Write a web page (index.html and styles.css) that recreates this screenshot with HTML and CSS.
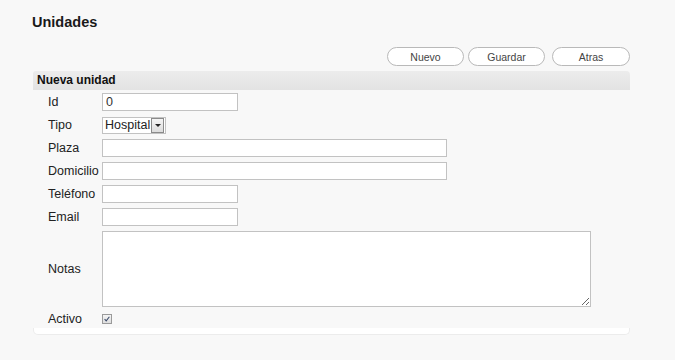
FILE: index.html
```html
<!DOCTYPE html>
<html lang="es">
<head>
  <title>Unidades</title>
  <meta charset="utf-8">
  <meta name="viewport" content="width=device-width, initial-scale=1">
  <link rel="stylesheet" href="styles.css">
</head>

<body>
  <div class="page">
    <h1 class="page__title">Unidades</h1>

    <div class="toolbar">
      <button class="toolbar__button" type="button">Nuevo</button>
      <button class="toolbar__button" type="button">Guardar</button>
      <button class="toolbar__button toolbar__button_wide" type="button">Atras</button>
    </div>

    <form class="panel" id="unidadForm">
      <div class="panel__header">Nueva unidad</div>

      <div class="panel__body">
        <label class="field__label" for="unidad_Id">Id</label>
        <input class="field__input field__input_short" id="unidad_Id" type="text" value="0">

        <label class="field__label" for="unidad_Tipo">Tipo</label>
        <div class="select">
          <select class="select__control" id="unidad_Tipo">
            <option>Hospital</option>
            <option>Clínica</option>
          </select>
          <span class="select__arrow"></span>
        </div>

        <label class="field__label" for="unidad_Plaza">Plaza</label>
        <input class="field__input field__input_long" id="unidad_Plaza" type="text">

        <label class="field__label" for="unidad_Domicilio">Domicilio</label>
        <input class="field__input field__input_long" id="unidad_Domicilio" type="text">

        <label class="field__label" for="unidad_Telefono">Teléfono</label>
        <input class="field__input field__input_short" id="unidad_Telefono" type="text">

        <label class="field__label" for="unidad_Email">Email</label>
        <input class="field__input field__input_short" id="unidad_Email" type="text">

        <label class="field__label" for="unidad_Notas">Notas</label>
        <textarea class="field__textarea" id="unidad_Notas"></textarea>

        <label class="field__label field__label_small" for="unidad_Activo">Activo</label>
        <span class="checkbox" id="unidad_Activo" role="checkbox" aria-checked="true">
          <svg viewBox="0 0 10 10" class="checkbox__tick">
            <path d="M2 5.2 4 7.4 8 2.2" fill="none" stroke="#3a4a6a" stroke-width="1.3"/>
          </svg>
        </span>
      </div>

      <div class="panel__footer"></div>
    </form>
  </div>
</body>
</html>
```

FILE: styles.css
```css
*,
*::before,
*::after {
  box-sizing: border-box;
  margin: 0;
  padding: 0;
}

body {
  color: #222222;
  font-family: "Liberation Sans", Arial, sans-serif;
  font-size: 12.5px;
  background-color: #f8f8f8;
}

.page {
  width: 597px;
  margin-left: 33px;
  padding-top: 14px;
}

.page__title {
  margin-left: -1px;
  font-size: 14.5px;
  font-weight: bold;
  line-height: 17px;
  color: #1a1a1a;
}

.toolbar {
  display: flex;
  justify-content: flex-end;
  gap: 4px;
  margin-top: 16px;
}

.toolbar__button {
  width: 77px;
  height: 19px;
  border: 1px solid #b9b9b9;
  border-radius: 10px;
  color: #444444;
  font-family: inherit;
  font-size: 10.5px;
  background-color: #ffffff;
}

.toolbar__button_wide {
  margin-left: 3px;
  width: 78px;
}

.panel {
  margin-top: 5px;
}

.panel__header {
  height: 19px;
  padding-left: 4px;
  border-radius: 3px 4px 0 0;
  font-size: 12px;
  font-weight: bold;
  line-height: 19px;
  color: #111111;
  background: linear-gradient(#ececec, #e3e3e3);
}

.panel__body {
  display: grid;
  grid-template-columns: 54px 1fr;
  row-gap: 5px;
  align-items: center;
  padding: 3px 0 0 15px;
}

.field__label {
  line-height: 18px;
  color: #222222;
}

.field__input {
  height: 18px;
  border: 1px solid #c2c2c2;
  padding: 0 3px;
  font-family: inherit;
  font-size: 12.5px;
  color: #333333;
  background-color: #ffffff;
}

.field__input_short {
  width: 136px;
}

.field__input_long {
  width: 345px;
}

.select {
  display: flex;
  align-items: center;
  width: 64px;
  height: 17px;
  border: 1px solid #c2c2c2;
  background-color: #ffffff;
}

.select__control {
  flex: 1;
  min-width: 0;
  height: 15px;
  border: none;
  padding: 0 0 0 2px;
  font-family: inherit;
  font-size: 12.5px;
  line-height: 15px;
  color: #222222;
  background: transparent;
  appearance: none;
  outline: none;
}

.select__arrow {
  position: relative;
  flex: none;
  width: 13px;
  height: 15px;
  margin-right: 1px;
  border: 1px solid #8a8a8a;
  background: linear-gradient(#f4f4f4, #dcdcdc);
}

.select__arrow::after {
  content: "";
  position: absolute;
  top: 5px;
  left: 3px;
  border-top: 3px solid #222222;
  border-left: 3px solid transparent;
  border-right: 3px solid transparent;
}

.field__textarea {
  width: 489px;
  height: 76px;
  border: 1px solid #c2c2c2;
  font-family: inherit;
  background-color: #ffffff;
}

.field__label_small {
  line-height: 14px;
}

.checkbox {
  display: block;
  width: 10px;
  height: 10px;
  border: 1px solid #9a9a9a;
  background: linear-gradient(#f4f4f4, #dedede);
}

.checkbox__tick {
  display: block;
  width: 8px;
  height: 8px;
}

.panel__footer {
  height: 7px;
  margin-top: 2px;
  border: 1px solid #ececec;
  border-top: none;
  border-radius: 0 0 5px 5px;
  background-color: #ffffff;
}
```
